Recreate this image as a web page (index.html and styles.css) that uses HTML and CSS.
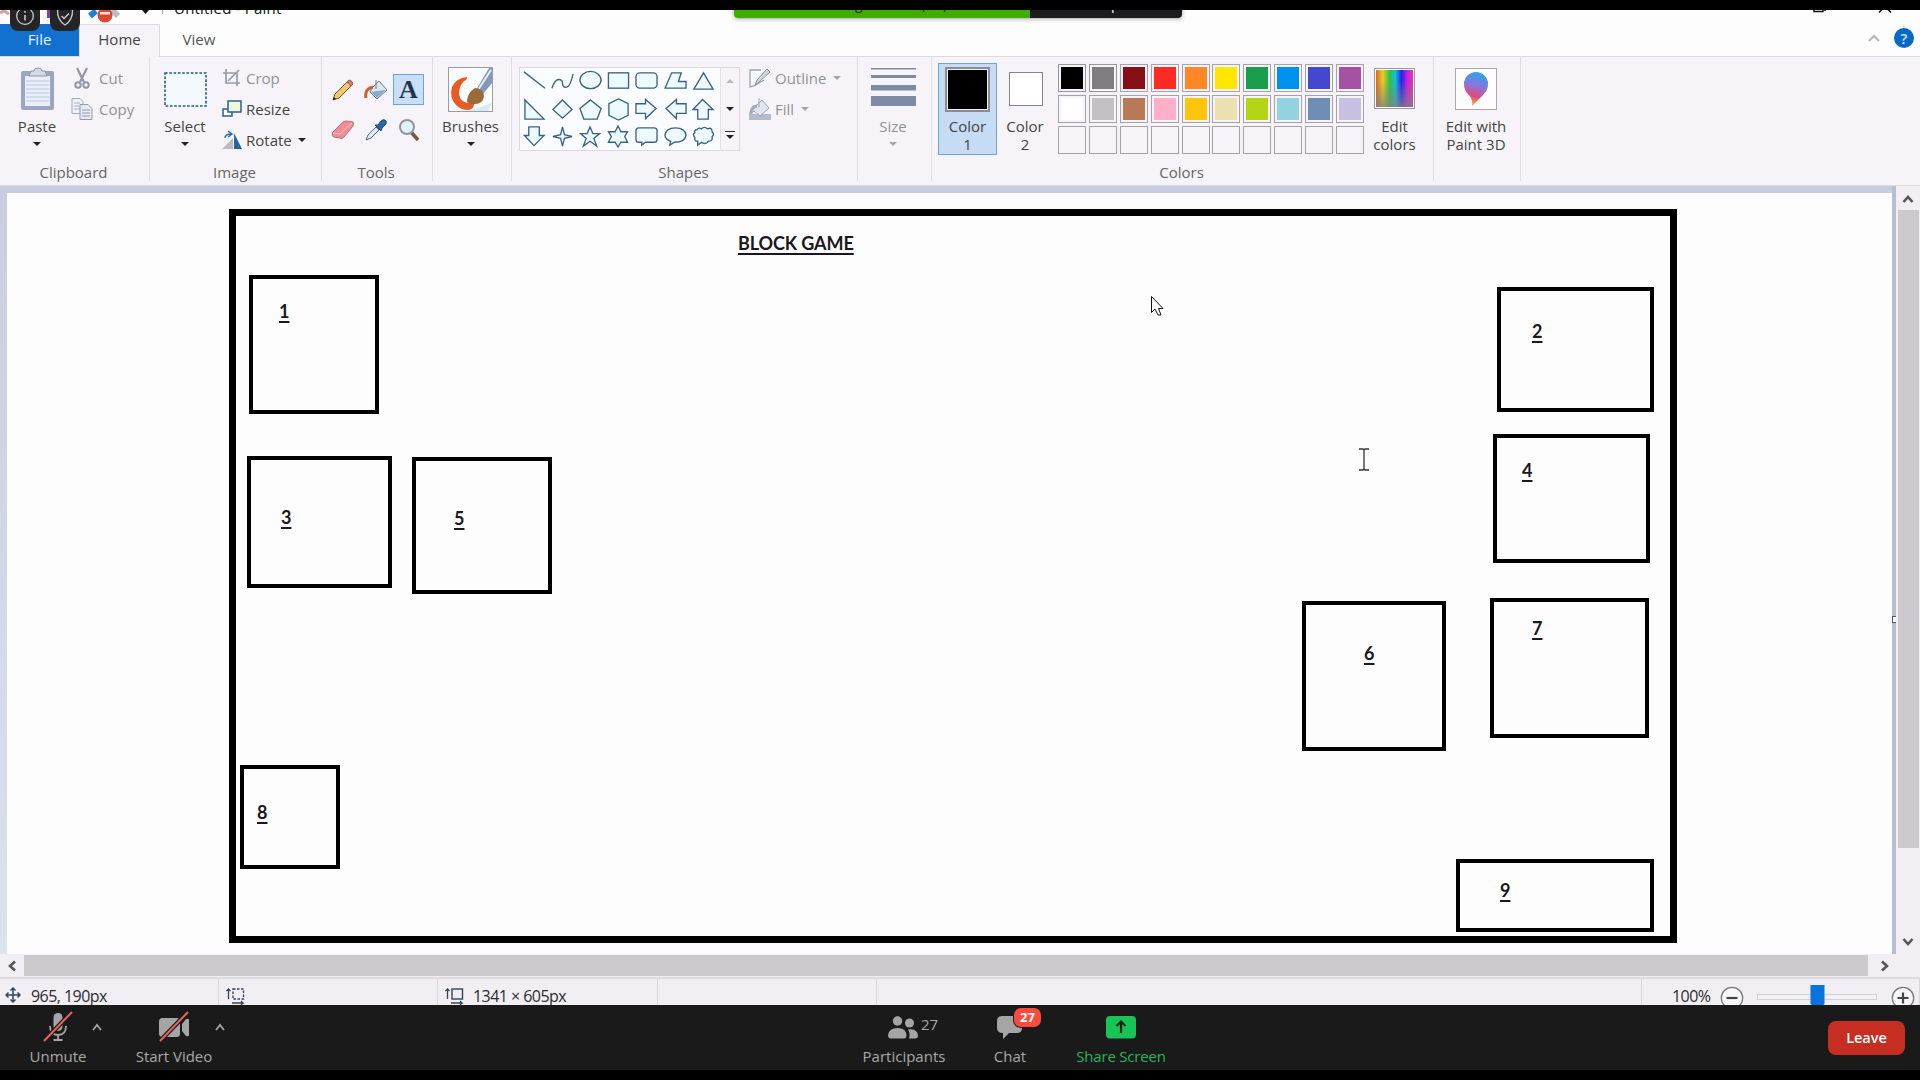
FILE: index.html
```
<!DOCTYPE html>
<html lang="en">
<head>
<meta charset="utf-8">
<title>Untitled - Paint</title>
<link rel="stylesheet" href="styles.css">
</head>
<body>
<div class="screen">
  <div class="letterbox top"></div>

  <header class="titlebar">
    <div class="quick">
      <svg width="150" height="16" viewBox="0 0 150 16"><path d="M0 3l4-2 5 3" stroke="#d9a0a0" stroke-width="3" fill="none"/><rect x="47" y="0" width="6" height="8" fill="#7a4aa0"/><path d="M90 6l6-5" stroke="#1c7fd6" stroke-width="6"/><path d="M112 0l6 6" stroke="#b9bccb" stroke-width="6"/><circle cx="105" cy="5" r="7.500" fill="#d9482f"/><rect x="100" y="2" width="10" height="2.500" fill="#fbd9d0"/><path d="M142 0h7l-3.500 4z" fill="#111"/></svg>
    </div>
    <span class="title-sep"></span>
    <span class="title">Untitled - Paint</span>
    <svg class="winbtns" width="90" height="5" viewBox="0 0 90 5"><path d="M4 0v1.500h9V0M14 0l2 0" stroke="#111" stroke-width="1.500" fill="none"/><path d="M69 2.500L72 -.5M81 2.500L78 -.5" stroke="#111" stroke-width="1.500"/></svg>
  </header>

  <nav class="tabs">
    <span class="tab file">File</span>
    <span class="tab home">Home</span>
    <span class="tab view">View</span>
    <span class="help">
      <svg width="14" height="10" viewBox="0 0 14 10"><path d="M2 8l5-5 5 5" stroke="#b5b5b8" stroke-width="2" fill="none"/></svg>
      <b>?</b>
    </span>
  </nav>

  <section class="ribbon">
    <div class="group g-clip">
      <div class="body">
        <div class="big paste">
          <span class="ico"><svg width="36" height="44" viewBox="0 0 36 44"><rect x="1" y="4" width="33" height="39" rx="2" fill="#9aa6c2"/><rect x="5" y="9" width="25" height="30" fill="#e9f0fb"/><path d="M6 14h23M6 18h23M6 22h23M6 26h23M6 30h23M6 34h23" stroke="#b9c6dc"/><path d="M9 9l2-5h3q0-3 4-3t4 3h3l2 5z" fill="#d5dae4" stroke="#8c95a8"/></svg></span>
          <span>Paste</span><i class="arr"></i>
        </div>
        <div class="rows">
          <div class="row off"><svg width="22" height="22" viewBox="0 0 22 22"><path d="M6 1l7 14M16 1L9 15" stroke="#9297a3" stroke-width="2.200"/><circle cx="7" cy="18" r="2.700" fill="none" stroke="#9297a3" stroke-width="2"/><circle cx="15" cy="18" r="2.700" fill="none" stroke="#9297a3" stroke-width="2"/></svg><span>Cut</span></div>
          <div class="row off"><svg width="22" height="24" viewBox="0 0 22 24"><path d="M1 1.500h8l3 3v12H1z" fill="#eef1f6" stroke="#a2a9b6"/><path d="M3 6h6M3 9h6M3 12h6" stroke="#a9b2c2"/><path d="M9 7.500h8l4 4v11H9z" fill="#e6eaf2" stroke="#949cab"/><path d="M11 13h8M11 16h8M11 19h8" stroke="#949db0"/></svg><span>Copy</span></div>
        </div>
      </div>
      <div class="label">Clipboard</div>
    </div>

    <div class="group g-image">
      <div class="body">
        <div class="big select">
          <span class="ico"><svg width="44" height="36" viewBox="0 0 44 36"><rect x="1" y="1" width="41" height="33" fill="#f4f9fe" stroke="#235a8d" stroke-width="1.600" stroke-dasharray="2.600 1.700"/></svg></span>
          <span>Select</span><i class="arr"></i>
        </div>
        <div class="rows">
          <div class="row off"><svg width="20" height="20" viewBox="0 0 20 20"><path d="M1 5h14v13M4 1v14h14M6 13L17 2" stroke="#979ba4" stroke-width="1.700" fill="none"/></svg><span>Crop</span></div>
          <div class="row"><svg width="20" height="20" viewBox="0 0 20 20"><rect x="1" y="10" width="9" height="7" fill="#fff" stroke="#2d5f92" stroke-width="1.500"/><rect x="6" y="2" width="13" height="11" fill="#ebfbd9" stroke="#2d5f92" stroke-width="1.500"/></svg><span>Resize</span></div>
          <div class="row"><svg width="20" height="20" viewBox="0 0 20 20"><path d="M0 19L11 8v11z" fill="#b9bcc1"/><path d="M12 3v16h8z" fill="#26659f"/><path d="M3 8q0-4 6-4M6 1l4 3-4 3" stroke="#2f6ba6" stroke-width="1.500" fill="none"/></svg><span>Rotate</span><i class="arr"></i></div>
        </div>
      </div>
      <div class="label">Image</div>
    </div>

    <div class="group g-tools">
      <div class="toolgrid">
        <span><svg width="22" height="22" viewBox="0 0 22 22"><path d="M1 21l2-6L16 2l4 4L7 19z" fill="#f3c968" stroke="#66563d"/><path d="M15 3l2-2q3 0 4 4l-2 2z" fill="#d77e6e" stroke="#8e5a4e"/><path d="M1 21l1-3 2 2z" fill="#222"/></svg></span>
        <span><svg width="24" height="22" viewBox="0 0 24 22"><path d="M8 9l7-7 8 9-10 9-7-7z" fill="#dce7f2" stroke="#66798f"/><path d="M13 12l9-1-9 8-6-6z" fill="#8aa9cb"/><path d="M12 1v9" stroke="#66798f"/><path d="M2 19Q0 10 9 8" stroke="#c9602e" stroke-width="3" fill="none"/></svg></span>
        <span class="on">A</span>
        <span><svg width="24" height="20" viewBox="0 0 24 20"><path d="M2 12L12 2q2-1 4-1l6 1q1 1 0 4L13 17q-1 2-4 1l-6-1q-3-1-1-5z" fill="#ef8e97" stroke="#c56670"/><path d="M2 13l7 1L21 3" stroke="#f9c4c8" fill="none"/></svg></span>
        <span><svg width="22" height="22" viewBox="0 0 22 22"><path d="M1 21l2-5 8-8 3 3-8 8z" fill="#dceafa" stroke="#52677d"/><path d="M10 6l6 6 1-3 4-4q1-3-1-4t-4 1l-3 4z" fill="#2767ab" stroke="#1d4b80"/></svg></span>
        <span><svg width="22" height="24" viewBox="0 0 22 24"><path d="M13 14l7 8" stroke="#7a573f" stroke-width="3.500"/><circle cx="9" cy="9" r="7" fill="#e4f1fb" stroke="#8f959d" stroke-width="2"/></svg></span>
      </div>
      <div class="label">Tools</div>
    </div>

    <div class="group g-brush">
      <div class="body"><div class="big">
        <span class="ico"><svg width="45" height="45" viewBox="0 0 45 45"><rect x=".5" y=".5" width="44" height="44" fill="#fafcfd"/><path d="M44 14v22L20 44h20l4-8z" fill="#d8ecf5"/><path d="M19 10Q8 11 4 20q-3 11 4 18 5 5 12 5 7-1 6-8-3-2-6 1-8-1-9-9 0-8 5-13 3-1 3-4z" fill="#ea5a23"/><path d="M28 23L41 1h4v14L34 28z" fill="#8299b8"/><path d="M30 23L43 3" stroke="#e9f0f8" stroke-width="2"/><path d="M19 35q0-9 8-14 8 0 9 8-1 8-9 8-3 1-8-2z" fill="#9a6a38"/><rect x=".5" y=".5" width="44" height="44" fill="none" stroke="#9a9da2"/></svg></span>
        <span>Brushes</span><i class="arr"></i>
      </div></div>
    </div>

    <div class="group g-shapes">
      <div class="body">
        <div class="gallery">
          <div class="shapes">
            <svg viewBox="0 0 24 24"><path d="M1 3l22 17"/></svg>
            <svg viewBox="0 0 24 24"><path d="M1 20q3-9 7-9t4 4 4 4 7-14"/></svg>
            <svg viewBox="0 0 24 24"><ellipse cx="12" cy="11.500" rx="11" ry="9"/></svg>
            <svg viewBox="0 0 24 24"><rect x="1.500" y="4" width="21" height="16"/></svg>
            <svg viewBox="0 0 24 24"><rect x="1" y="4" width="22" height="16" rx="4"/></svg>
            <svg viewBox="0 0 24 24"><path d="M1 20L8 4h10l-3 9h8v7z"/></svg>
            <svg viewBox="0 0 24 24"><path d="M12 4l10 17H2z"/></svg>
            <svg viewBox="0 0 24 24"><path d="M2 2v20h20z"/></svg>
            <svg viewBox="0 0 24 24"><path d="M12 2l10 10-10 9L2 12z"/></svg>
            <svg viewBox="0 0 24 24"><path d="M12 2l11 9-4 11H5L1 11z"/></svg>
            <svg viewBox="0 0 24 24"><path d="M12 1l10 5v12l-10 5-10-5V6z"/></svg>
            <svg viewBox="0 0 24 24"><path d="M1 6h10V1.500L22 11 11 21.500V16H1z"/></svg>
            <svg viewBox="0 0 24 24"><path d="M23 6H13V1.500L2 11l11 10.500V16h10z"/></svg>
            <svg viewBox="0 0 24 24"><path d="M6 22V12H1L11 1.500 22 12h-5v10z"/></svg>
            <svg viewBox="0 0 24 24"><path d="M6 2v9H1.500l10 10.500L22 11h-5V2z"/></svg>
            <svg viewBox="0 0 24 24"><path d="M12 2l2 8 8 2-8 2-2 8-2-8-8-2 8-2z"/></svg>
            <svg viewBox="0 0 24 24"><path d="M11.500 2l3 7h7l-6 5 3 8-7-5-7 5 3-8-6-5h7z"/></svg>
            <svg viewBox="0 0 24 24"><path d="M11.500 1l3 6h7l-3 5 3 6h-7l-3 5-3-5h-7l3-6-3-5h7z"/></svg>
            <svg viewBox="0 0 24 24"><path d="M4 3h16q3 0 3 3v9q0 3-3 3h-9l-4 3v-3H4q-3 0-3-3V6q0-3 3-3z"/></svg>
            <svg viewBox="0 0 24 24"><path d="M7 17Q1 15 1 10.500 2 3 12 3t11 7.500Q22 18 11 18l-5 3z"/></svg>
            <svg viewBox="0 0 24 24"><path d="M5 5q2-3 5-1 3-3 6 0 5-2 5 3 3 3 0 5 1 5-4 5-3 4-7 1l-4 3v-4q-4 0-3-4-3-3 0-5-1-3 2-3z"/></svg>
          </div>
          <div class="spin"><i class="arr up"></i><i class="arr"></i><span class="more"><i class="arr"></i></span></div>
        </div>
        <div class="rows">
          <div class="row off"><svg width="22" height="20" viewBox="0 0 22 20"><path d="M12 2H1v17l4-1 10-6" stroke="#9aa2b0" stroke-width="1.300" fill="#fafbff"/><path d="M6 17l2-5L18 1l3 3L10 14z" fill="#d0d4dc" stroke="#8b9099"/></svg><span>Outline</span><i class="arr"></i></div>
          <div class="row off"><svg width="22" height="24" viewBox="0 0 22 24"><rect x="0" y="17" width="22" height="6" fill="#b4bccc"/><path d="M1 17q0-8 7-9L13 3l7 8-9 8-6-5z" fill="#dfe6f0" stroke="#98a5bb"/><path d="M10 1v9" stroke="#98a5bb"/><path d="M2 17q0-7 6-8" stroke="#a2acbd" stroke-width="3" fill="none"/></svg><span>Fill</span><i class="arr"></i></div>
        </div>
      </div>
      <div class="label">Shapes</div>
    </div>

    <div class="group g-size">
      <div class="body"><div class="big off">
        <span class="ico"><svg width="45" height="40" viewBox="0 0 45 40"><path fill="#7f8ba5" d="M0 1h45v1.500H0zM0 8h45v3H0zM0 18h45v5.500H0zM0 29h45v10H0z"/></svg></span>
        <span>Size</span><i class="arr"></i>
      </div></div>
    </div>

    <div class="group g-colors">
      <div class="body">
        <div class="big color1"><span class="ico"><i class="sw1"></i></span><span>Color</span><span>1</span></div>
        <div class="big color2"><span class="ico"><i class="sw2"></i></span><span>Color</span><span>2</span></div>
        <div class="palette">
          <i class="black"></i><i class="gray"></i><i class="maroon"></i><i class="red"></i><i class="orange"></i><i class="yellow"></i><i class="green"></i><i class="azure"></i><i class="indigo"></i><i class="purple"></i>
          <i class="white"></i><i class="silver"></i><i class="brown"></i><i class="rose"></i><i class="gold"></i><i class="tan"></i><i class="lime"></i><i class="sky"></i><i class="steel"></i><i class="lavender"></i>
          <i></i><i></i><i></i><i></i><i></i><i></i><i></i><i></i><i></i><i></i>
        </div>
        <div class="big editc"><span class="ico"><i class="rainbow"></i></span><span>Edit</span><span>colors</span></div>
      </div>
      <div class="label">Colors</div>
    </div>

    <div class="group g-p3d">
      <div class="body"><div class="big">
        <span class="ico"><svg width="42" height="42" viewBox="0 0 42 42"><defs><linearGradient id="drop" x1=".6" y1="0" x2=".4" y2="1"><stop offset="0" stop-color="#23a8ea"/><stop offset=".4" stop-color="#8a74e0"/><stop offset=".72" stop-color="#e24a78"/><stop offset="1" stop-color="#f9b13a"/></linearGradient></defs><rect x=".5" y=".5" width="41" height="41" fill="#fdfdfe" stroke="#a9a9ad"/><path d="M17 38q1-7-3-11-5-4-5-11a12 12 0 0 1 24 0q0 6-5 11t-11 11z" fill="url(#drop)"/></svg></span>
        <span>Edit with</span><span>Paint 3D</span>
      </div></div>
    </div>
  </section>

  <main class="work">
    <div class="canvas">
      <div class="frame"></div>
      <div class="heading">BLOCK GAME</div>
      <div class="block b1">1</div>
      <div class="block b2">2</div>
      <div class="block b3">3</div>
      <div class="block b4">4</div>
      <div class="block b5">5</div>
      <div class="block b6">6</div>
      <div class="block b7">7</div>
      <div class="block b8">8</div>
      <div class="block b9">9</div>
      <svg class="pointer" width="14" height="21" viewBox="0 0 14 21"><path d="M.5.500v16l3.500-3.500 3 6h3l-2.500-6.500H12z" fill="#fff" stroke="#111"/></svg>
      <svg class="ibeam" width="10" height="23" viewBox="0 0 10 23"><path d="M0 1h4l1 1 1-1h4M0 22h4l1-1 1 1h4M5 2v19" stroke="#333" stroke-width="1.300" fill="none"/></svg>
    </div>
    <div class="gutter"><i class="handle"></i></div>
    <div class="vscroll">
      <svg width="12" height="10" viewBox="0 0 12 10"><path d="M1.500 8L6 3l4.500 5" stroke="#555" stroke-width="2.600" fill="none"/></svg>
      <i class="vthumb"></i>
      <svg width="12" height="10" viewBox="0 0 12 10"><path d="M1.500 2L6 7l4.500-5" stroke="#555" stroke-width="2.600" fill="none"/></svg>
    </div>
  </main>

  <div class="hscroll">
    <svg width="10" height="12" viewBox="0 0 10 12"><path d="M8 1.500L3 6l5 4.500" stroke="#555" stroke-width="2.600" fill="none"/></svg>
    <i class="hthumb"></i>
    <svg width="10" height="12" viewBox="0 0 10 12"><path d="M2 1.500L7 6l-5 4.500" stroke="#555" stroke-width="2.600" fill="none"/></svg>
  </div>

  <footer class="status">
    <div class="cell s1"><svg width="16" height="16" viewBox="0 0 16 16"><path d="M8 1v14M1 8h14M5.500 3.500L8 1l2.500 2.500M5.500 12.500L8 15l2.500-2.500M3.500 5.500L1 8l2.500 2.500M12.500 5.500L15 8l-2.500 2.500" stroke="#33475b" stroke-width="1.500" fill="none"/></svg><span>965, 190px</span></div>
    <div class="cell s2"><svg width="19" height="18" viewBox="0 0 19 18"><path d="M2.500 12V2M.5 4l2-2 2 2M6 16h11l-2-2m2 2l-2 2" stroke="#33475b" stroke-width="1.300" fill="none"/><rect x="7" y="2" width="10.500" height="10" stroke="#33475b" stroke-width="1.400" fill="none" stroke-dasharray="2.500 1.500"/></svg></div>
    <div class="cell s3"><svg width="19" height="18" viewBox="0 0 19 18"><path d="M2.500 12V2M.5 4l2-2 2 2M6 16h11l-2-2m2 2l-2 2" stroke="#33475b" stroke-width="1.300" fill="none"/><rect x="7" y="2" width="10.500" height="10" stroke="#33475b" stroke-width="1.400" fill="none"/></svg><span>1341 × 605px</span></div>
    <div class="cell s4"></div>
    <div class="cell s5"></div>
    <div class="cell s6">
      <span>100%</span>
      <svg width="24" height="24" viewBox="0 0 24 24"><circle cx="12" cy="12" r="10.700" fill="#f7f6f8" stroke="#77777b" stroke-width="1.300"/><path d="M6.500 12h11" stroke="#444" stroke-width="2.200"/></svg>
      <svg class="slider" width="120" height="22" viewBox="0 0 120 22"><rect x=".5" y="9.500" width="119" height="5" fill="#f3f2f4" stroke="#d0cfd3"/><path d="M53.500 0h14v19l-4 3h-6l-4-3z" fill="#0873dd"/></svg>
      <svg width="24" height="24" viewBox="0 0 24 24"><circle cx="12" cy="12" r="10.700" fill="#f7f6f8" stroke="#77777b" stroke-width="1.300"/><path d="M6.500 12h11M12 6.500v11" stroke="#444" stroke-width="2.200"/></svg>
    </div>
  </footer>

  <div class="meeting">
    <div class="ctl unmute"><span class="mi"><svg width="30" height="32" viewBox="0 0 30 32"><rect x="10.500" y="2" width="9" height="18" rx="4.500" fill="#a5a5a5"/><path d="M7 15q0 9 8 9t8-9M15 24v5M10.500 29h9" stroke="#a5a5a5" stroke-width="1.800" fill="none"/><path d="M1 30L29 1" stroke="#1a1a1a" stroke-width="4.500"/><path d="M1 30L29 1" stroke="#e8645c" stroke-width="2"/></svg></span><span>Unmute</span></div>
    <svg class="caret" width="12" height="8" viewBox="0 0 12 8"><path d="M2 7l4-5 4 5" stroke="#a5a5a5" stroke-width="1.800" fill="none"/></svg>
    <div class="ctl video"><span class="mi"><svg width="32" height="32" viewBox="0 0 32 32"><rect x="1" y="7" width="21" height="19" rx="3.500" fill="#a5a5a5"/><path d="M24 13l4-5q3-1 3 1v15q0 2-3 1l-4-5z" fill="#a5a5a5"/><path d="M2 30L30 1" stroke="#1a1a1a" stroke-width="4.500"/><path d="M2 30L30 1" stroke="#e8645c" stroke-width="2"/></svg></span><span>Start Video</span></div>
    <svg class="caret" width="12" height="8" viewBox="0 0 12 8"><path d="M2 7l4-5 4 5" stroke="#a5a5a5" stroke-width="1.800" fill="none"/></svg>
    <div class="ctl people"><span class="mi"><svg width="31" height="32" viewBox="0 0 31 32"><g fill="#a5a5a5"><circle cx="9.500" cy="10" r="4.700"/><circle cx="21.500" cy="12" r="4.500"/><path d="M0 24q1-7 9.500-7t9 7q0 3.500-2.500 3.500H3Q0 27.500 0 24zM20 18.500q9-1 10 5.500 0 3.500-3 3.500h-6q1.500-5-1-9z"/></g></svg><em>27</em></span><span>Participants</span></div>
    <div class="ctl chat"><span class="mi"><svg width="26" height="32" viewBox="0 0 26 32"><path d="M5 5h16q4 0 4 5v7q0 5-5 5h-8l-6 6v-6Q0 22 0 17v-7q0-5 5-5z" fill="#a5a5a5"/></svg><b class="badge">27</b></span><span>Chat</span></div>
    <div class="ctl share"><span class="mi"><svg width="30" height="32" viewBox="0 0 30 32"><rect x="0" y="5" width="30" height="22.500" rx="4" fill="#16c457"/><path d="M15 22V11M10.500 15l4.500-4.500 4.500 4.500" stroke="#0f2216" stroke-width="2.200" fill="none"/></svg></span><span>Share Screen</span></div>
    <div class="leave">Leave</div>
  </div>
  <div class="letterbox bottom"></div>

  <div class="sharebar"><span class="who"><i>g</i><i>(</i><i>)</i></span><span class="opt">View Options</span></div>
  <div class="letterbox cover"></div>
  <div class="pill info"><svg width="20" height="20" viewBox="0 0 20 20"><circle cx="10" cy="10" r="8.300" fill="none" stroke="#c9c9c9" stroke-width="1.300"/><path d="M10 9v5.500M10 5v1.800" stroke="#c9c9c9" stroke-width="1.600"/></svg></div>
  <div class="pill shield"><svg width="20" height="20" viewBox="0 0 20 20"><path d="M10 1q4 2.500 7.500 2.500Q18 14 10 19 2 14 2.500 3.500 6 3.500 10 1z" fill="none" stroke="#c9c9c9" stroke-width="1.300"/><path d="M6.500 10l2.500 2.500 5-5" stroke="#c9c9c9" stroke-width="1.500" fill="none"/></svg></div>
</div>
</body>
</html>
```
FILE: styles.css
```
* { box-sizing: border-box; }
body { margin: 0; background: #000; font-family: "Open Sans", "Noto Sans", sans-serif; font-size: 15px; line-height: 18px; color: #444; }
i, em { font-style: normal; }
svg { display: block; flex: none; }
.screen { position: relative; width: 1920px; height: 1080px; overflow: hidden; display: flex; flex-direction: column; }
.letterbox { flex: none; height: 10px; background: #000; position: relative; z-index: 5; }

/* title bar and tabs */
.titlebar { height: 14px; flex: none; background: #fdfdfd; display: flex; align-items: flex-start; }
.quick { width: 162px; height: 14px; }
.title-sep { width: 1px; height: 4px; background: #aaa; }
.title { margin: -11px 0 0 11px; color: #111; letter-spacing: .2px; }
.winbtns { margin-left: auto; margin-right: 20px; }
.tabs { height: 33px; flex: none; background: #fdfdfd; border-bottom: 1px solid #dcdadd; display: flex; }
.tab { height: 33px; padding-top: 6px; text-align: center; }
.file { width: 79px; height: 32px; background: #1270cf; color: #e8f3ff; }
.home { width: 81px; background: #f6f4f8; border: 1px solid #dedce0; border-bottom: 0; padding-top: 5px; }
.view { width: 78px; color: #555; }
.help { margin-left: auto; margin-right: 6px; padding-bottom: 4px; display: flex; align-items: center; gap: 13px; }
.help b { width: 20px; height: 20px; border-radius: 50%; background: #0669c4; color: #cfe6ff; text-align: center; font-weight: 600; line-height: 20px; }

/* ribbon */
.ribbon { height: 129px; flex: none; background: #f6f4f8; border-bottom: 1px solid #dcdadf; display: flex; }
.group { flex: none; display: flex; flex-direction: column; justify-content: space-between; border-right: 1px solid #e0dee3; height: 124px; }
.body { display: flex; }
.label { text-align: center; color: #666; padding-right: 2px; }
.big { display: flex; flex-direction: column; align-items: center; white-space: nowrap; }
.big .ico { height: 60px; display: flex; align-items: flex-start; padding-top: 10px; }
.off { color: #929296; }
.arr { width: 0; height: 0; border: 4px solid transparent; border-top: 4px solid #222; border-bottom: 0; flex: none; }
.off .arr { border-top-color: #a5a5a9; }
.big .arr { margin-top: 7px; }
.rows { padding-top: 5px; }
.row { height: 31px; display: flex; align-items: center; white-space: nowrap; }
.row .arr { margin-left: 7px; }

.g-clip { width: 150px; }
.paste { width: 64px; margin-left: 5px; }
.paste .ico { padding-left: 2px; }
.g-clip .rows { padding-left: 2px; }
.g-clip .row { gap: 6px; }
.g-image { width: 172px; }
.select { width: 62px; margin-left: 4px; }
.select .ico { padding-top: 15px; padding-left: 1px; }
.g-image .rows { padding-left: 6px; }
.g-image .row { gap: 4px; }
.g-image .row .arr { margin-left: 2px; }
.g-tools { width: 111px; }
.toolgrid { display: grid; grid-template-columns: 33px 34px 32px; grid-template-rows: 41px 40px; padding: 12px 0 0 4px; }
.toolgrid span { display: flex; align-items: center; justify-content: center; }
.toolgrid .on { width: 31px; height: 31px; margin-top: 5px; background: #c9dff8; border: 1px solid #6fa3dc; font: bold 26px/28px "Liberation Serif", serif; color: #22334f; }
.g-brush { width: 79px; }
.g-brush .big { width: 75px; }
.g-shapes { width: 346px; }
.gallery { margin: 10px 0 0 7px; width: 221px; height: 84px; border: 1px solid #dcdadf; display: flex; background: #fafcff; }
.shapes { width: 200px; display: grid; grid-template-columns: repeat(7, 28.2px); grid-template-rows: repeat(3, 27.5px); justify-items: center; align-items: center; }
.shapes svg { width: 23px; height: 23px; fill: #edfaff; stroke: #3b6283; stroke-width: 1.4; }
.shapes svg:nth-child(-n+7) { margin-top: -2px; }
.shapes svg:nth-child(-n+2) { fill: none; }
.spin { flex: 1; border-left: 1px solid #e4e2e7; background: #f6f4f8; display: flex; flex-direction: column; align-items: center; padding-top: 11px; gap: 24px; }
.spin .up { transform: rotate(180deg); border-top-color: #bbb; }
.more { border-top: 1px solid #333; padding: 3px 1px 0; margin-top: -4px; }
.more .arr { display: block; }
.g-shapes .rows { padding-left: 9px; }
.g-shapes .row { gap: 4px; }
.g-shapes .row .arr { margin-left: 3px; }
.g-size { width: 74px; }
.g-size .big { width: 70px; }
.g-colors { width: 502px; }
.color1 { width: 59px; height: 92px; margin: 6px 0 0 6px; background: #c6dcf5; border: 1px solid #73a1d8; }
.color1 .ico { height: 53px; padding-top: 3px; }
.sw1 { width: 45px; height: 45px; border: 2px solid #8b8d94; background: #000; box-shadow: inset 0 0 0 1px #e8eef5; }
.color2 { width: 56px; }
.color2 .ico { padding-top: 15px; padding-left: 1px; }
.sw2 { width: 34px; height: 34px; border: 1px solid #858588; background: #fff; }
.palette { margin: 7px 0 0 5px; display: grid; grid-template-columns: repeat(10, 28px); grid-auto-rows: 28px; column-gap: 2.9px; row-gap: 3px; }
.palette i { border: 1px solid #a5a3a9; padding: 2px; background-clip: content-box; }
.black { background-color: #000; } .gray { background-color: #7f7f82; } .maroon { background-color: #880f18; } .red { background-color: #fb2b22; }
.orange { background-color: #ff8726; } .yellow { background-color: #ffe600; } .green { background-color: #1a9e4b; } .azure { background-color: #0093ee; }
.indigo { background-color: #4448d0; } .purple { background-color: #a652a2; } .white { background-color: #fff; } .silver { background-color: #c2c2c4; }
.brown { background-color: #b87a56; } .rose { background-color: #ffb0c8; } .gold { background-color: #ffc40c; } .tan { background-color: #ece0ae; }
.lime { background-color: #b4d418; } .sky { background-color: #94d2e2; } .steel { background-color: #6e8eb5; } .lavender { background-color: #c8c0e2; }
.palette .black, .palette .gray { border-color: #99979c; }
.editc { width: 61px; }
.editc .ico, .g-p3d .ico { padding-top: 11px; }
.rainbow { width: 41px; height: 41px; border: 1px solid #9a9a9e; box-shadow: inset 0 0 0 1px #fff; background: linear-gradient(transparent 30%, rgba(128,128,128,.8)), linear-gradient(90deg, #e0531c, #e8cf2c 20%, #2fc13e 38%, #14c3d2 52%, #2322f0 68%, #c121e0 82%, #ff2f9a); }
.g-p3d { width: 87px; }
.g-p3d .big { width: 84px; }

/* work area: everything in the canvas is freely placed drawing content */
.work { height: 768px; flex: none; display: flex; background: linear-gradient(#c8cde0, #dbe3ee); }
.canvas { position: relative; margin: 7px 0 0 7px; width: 1885px; background: #fdfdfd; }
.frame { position: absolute; left: 222px; top: 16px; width: 1448px; height: 734px; border: 7px solid #000; }
.heading, .block { font: bold 18px/20px Lato, sans-serif; color: #1a1720; text-decoration: underline; text-decoration-thickness: 1.5px; text-underline-offset: 3px; }
.heading { position: absolute; left: 731px; top: 40px; white-space: nowrap; letter-spacing: -.1px; }
.block { position: absolute; border: 4px solid #000; }
.b1 { left: 242px; top: 82px; width: 130px; height: 139px; padding: 22px 0 0 26px; }
.b2 { left: 1490px; top: 94px; width: 157px; height: 125px; padding: 30px 0 0 31px; }
.b3 { left: 240px; top: 263px; width: 145px; height: 132px; padding: 47px 0 0 30px; }
.b4 { left: 1486px; top: 241px; width: 157px; height: 129px; padding: 22px 0 0 25px; }
.b5 { left: 405px; top: 264px; width: 140px; height: 137px; padding: 47px 0 0 38px; }
.b6 { left: 1295px; top: 408px; width: 144px; height: 150px; padding: 38px 0 0 58px; }
.b7 { left: 1483px; top: 405px; width: 159px; height: 140px; padding: 16px 0 0 38px; }
.b8 { left: 233px; top: 572px; width: 100px; height: 104px; padding: 33px 0 0 13px; }
.b9 { left: 1449px; top: 666px; width: 198px; height: 73px; padding: 17px 0 0 40px; }
.pointer { position: absolute; left: 1144px; top: 103px; }
.ibeam { position: absolute; left: 1352px; top: 255px; }
.gutter { width: 4px; background: #b6bfd0; padding-top: 430px; }
.handle { display: block; width: 4px; height: 7px; background: #fff; border: 1px solid #50586a; border-right: 0; }
.vscroll { width: 24px; background: #f1eff3; display: flex; flex-direction: column; align-items: center; padding: 8px 0 7px; }
.vthumb { width: 21px; height: 638px; background: #cccacd; margin: 6px 0 auto; }

.hscroll { height: 23px; flex: none; background: #f1eff3; display: flex; align-items: center; justify-content: space-between; padding: 0 30px 0 7px; }
.hthumb { width: 1844px; height: 21px; background: #cccacd; margin-right: auto; margin-left: 7px; }

.status { height: 28px; flex: none; background: #f1eff3; border-top: 2px solid #dddbdf; display: flex; color: #2c2c30; font-size: 16px; letter-spacing: -.55px; overflow: hidden; }
.cell { height: 26px; border-right: 1px solid #d9d7db; display: flex; align-items: flex-start; flex: none; white-space: nowrap; padding-top: 8px; }
.s1 { width: 219px; padding-left: 5px; gap: 10px; }
.s2 { width: 219px; padding-left: 7px; }
.s3 { width: 220px; padding-left: 7px; gap: 9px; }
.s4 { width: 219px; }
.s5 { width: 765px; }
.s6 { width: 278px; padding: 7px 0 0 30px; }
.s6 span { width: 48px; padding-top: 1px; }
.s6 .slider { margin: -1px 14px 0 13px; }

/* meeting controls */
.meeting { height: 65px; flex: none; background: #1a1a1a; color: #a9a9a9; display: flex; }
.ctl { display: flex; flex-direction: column; align-items: center; white-space: nowrap; padding-top: 6px; flex: none; }
.mi { height: 36px; display: flex; position: relative; }
.unmute { width: 76px; margin-left: 20px; }
.caret { margin: 18px 0 0 -5px; }
.video { width: 94px; margin-left: 24px; }
.video + .caret { margin-left: -7px; }
.people { width: 100px; margin-left: 628px; }
.people .mi { margin-left: 18px; }
.people em { font-size: 15px; margin: 4px 0 0 2px; }
.chat { width: 60px; margin-left: 26px; }
.badge { position: absolute; left: 17px; top: -3px; width: 27px; height: 19px; border-radius: 7px; background: #fa4b3e; color: #fff; font-size: 13px; line-height: 19px; text-align: center; box-shadow: 0 0 0 1px #1a1a1a; }
.share { width: 100px; margin-left: 31px; color: #24b65a; letter-spacing: -.2px; }
.leave { margin: 16px 15px 0 auto; width: 77px; height: 34px; border-radius: 8px; background: #c52e20; color: #fff; font-weight: 600; font-size: 14.5px; line-height: 34px; text-align: center; }

/* floating overlays at the top edge */
.cover { position: absolute; left: 0; top: 0; width: 100%; }
.sharebar { position: absolute; left: 734px; top: 0; width: 448px; height: 18px; display: flex; border-radius: 0 0 4px 4px; overflow: hidden; font-size: 14px; line-height: 18px; box-shadow: 0 1px 4px rgba(0,0,0,.35); }
.who { width: 296px; background: #42ab00; color: #14330a; display: flex; padding-left: 121px; }
.who i { margin: -5px 0 0; width: 66px; }
.who i + i { width: 22px; }
.opt { flex: 1; background: #1c1c1e; color: #fff; padding-left: 36px; margin-top: -5px; padding-bottom: 5px; white-space: nowrap; }
.pill { position: absolute; z-index: 4; top: 6px; width: 30px; height: 25px; border-radius: 0 0 8px 8px; background: #252527; display: flex; justify-content: center; }
.info { left: 10px; }
.shield { left: 50px; }
```
